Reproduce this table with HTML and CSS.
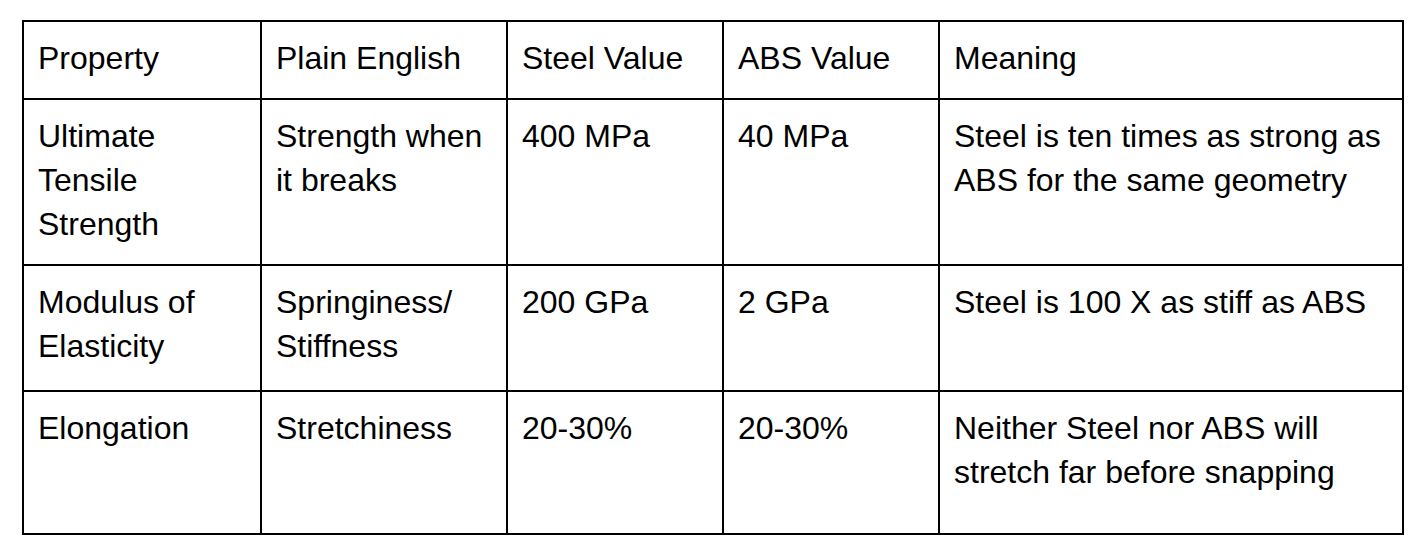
FILE: index.html
```html
<!DOCTYPE html>
<html lang="en">
<head>
<meta charset="utf-8">
<title>Steel vs ABS</title>
<link rel="stylesheet" href="styles.css">
</head>
<body>
<div class="page">
  <table class="props">
    <colgroup>
      <col class="c1">
      <col class="c2">
      <col class="c3">
      <col class="c4">
      <col class="c5">
    </colgroup>
    <tr class="r-head">
      <td>Property</td>
      <td>Plain English</td>
      <td>Steel Value</td>
      <td>ABS Value</td>
      <td>Meaning</td>
    </tr>
    <tr class="r-uts">
      <td>Ultimate Tensile Strength</td>
      <td>Strength when it breaks</td>
      <td>400 MPa</td>
      <td>40 MPa</td>
      <td>Steel is ten times as strong as ABS for the same geometry</td>
    </tr>
    <tr class="r-mod">
      <td>Modulus of Elasticity</td>
      <td>Springiness/ Stiffness</td>
      <td>200 GPa</td>
      <td>2 GPa</td>
      <td>Steel is 100 X as stiff as ABS</td>
    </tr>
    <tr class="r-elo">
      <td>Elongation</td>
      <td>Stretchiness</td>
      <td>20-30%</td>
      <td>20-30%</td>
      <td>Neither Steel nor ABS will stretch far before snapping</td>
    </tr>
  </table>
</div>
</body>
</html>
```

FILE: styles.css
```css
html, body {
  margin: 0;
  padding: 0;
  background: #ffffff;
}

.page {
  padding: 20px 22px;
}

.props {
  border-collapse: separate;
  border-spacing: 0;
  table-layout: fixed;
  width: 1382px;
  border-left: 2px solid #000;
  border-top: 2px solid #000;
  font-family: "Liberation Sans", Arial, sans-serif;
  font-size: 32px;
  line-height: 44px;
  color: #000;
}

.c1 { width: 238px; }
.c2 { width: 246px; }
.c3 { width: 216px; }
.c4 { width: 216px; }
.c5 { width: 464px; }

.props td {
  box-sizing: border-box;
  border-right: 2px solid #000;
  border-bottom: 2px solid #000;
  padding: 14px 8px 0 14px;
  vertical-align: top;
  text-align: left;
}

.r-head td { height: 78px; }
.r-uts td { height: 166px; }
.r-mod td { height: 126px; }
.r-elo td { height: 143px; }
```
